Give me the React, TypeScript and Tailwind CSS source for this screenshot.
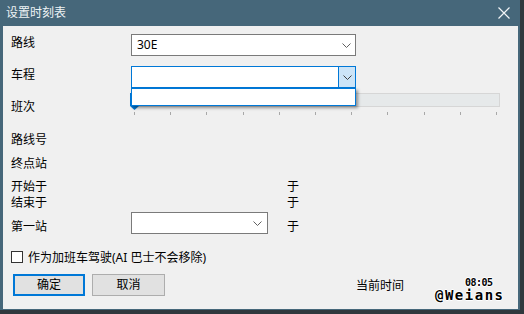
import { Fragment } from 'react'

const font = "font-['Noto_Sans','Noto_Sans_CJK_SC',sans-serif]"

function Chevron({ color = '#606060' }: { color?: string }) {
  return (
    <svg width="9" height="5" viewBox="0 0 9 5" className="shrink-0">
      <polyline points="0.5,0.5 4.5,4.5 8.5,0.5" fill="none" stroke={color} strokeWidth="1" />
    </svg>
  )
}

export default function App() {
  const ticks = Array.from({ length: 11 })

  return (
    <div className={`h-[314px] w-[524px] bg-[#30383d] text-[12px] text-black ${font}`}>
      <div className="flex h-[310px] w-[520px] flex-col bg-[#46677a]">
        {/* title bar */}
        <div className="flex h-[26px] shrink-0 items-center justify-between pl-[6px] pr-[10px] text-[12px] text-[#eef3f5]">
          <span className="leading-[16px]">设置时刻表</span>
          <svg width="12" height="12" viewBox="0 0 12 12">
            <path d="M0.5 0.5 L11.5 11.5 M11.5 0.5 L0.5 11.5" stroke="#f2f5f7" strokeWidth="1.2" />
          </svg>
        </div>

        <div className="relative mb-[1px] ml-[3px] mr-[2px] flex flex-1 flex-col bg-[#f0f0f0] pl-[8px]">
          {/* 路线 */}
          <div className="mt-[8px] flex h-[22px] items-start">
            <span className="mt-[1px] w-[120px] leading-[16px]">路线</span>
            <div className="flex h-[22px] w-[225px] items-center justify-between border border-[#7a7a7a] bg-white pl-[5px] pr-[4px]">
              <span className="leading-[16px]">30E</span>
              <Chevron />
            </div>
          </div>

          {/* 车程 */}
          <div className="mt-[10px] flex h-[22px] items-start">
            <span className="mt-[1px] w-[120px] leading-[16px]">车程</span>
            <div className="flex h-[22px] w-[225px] border border-[#0078d7] bg-white">
              <div className="flex-1" />
              <div className="flex w-[17px] items-center justify-center border-l border-[#0078d7] bg-[#cce4f7]">
                <Chevron color="#404040" />
              </div>
            </div>
          </div>

          {/* 班次 */}
          <div className="mt-[5px] flex h-[24px] items-start">
            <span className="mt-[6px] w-[120px] leading-[16px]">班次</span>
            <div className="flex w-[369px] flex-col">
              <div className="h-[14px] border border-[#d6d6d6] bg-[#e6e9ea]" />
              <div className="mt-[5px] flex h-[3px] justify-between px-[3px]">
                {ticks.map((_, i) => (
                  <span key={i} className="h-[3px] w-px bg-[#a8a8a8]" />
                ))}
              </div>
            </div>
          </div>

          <div className="mt-[15px] h-[16px] leading-[16px]">路线号</div>
          <div className="mt-[8px] h-[16px] leading-[16px]">终点站</div>

          {[['开始于', 'mt-[7px]'], ['结束于', 'mt-0']].map(([label, mt]) => (
            <Fragment key={label}>
              <div className={`${mt} flex h-[16px] leading-[16px]`}>
                <span className="w-[276px]">{label}</span>
                <span>于</span>
              </div>
            </Fragment>
          ))}

          {/* 第一站 */}
          <div className="mt-[1px] flex h-[22px] items-start">
            <span className="mt-[7px] w-[120px] leading-[16px]">第一站</span>
            <div className="flex h-[22px] w-[137px] items-center justify-end border border-[#7a7a7a] bg-white pr-[5px]">
              <Chevron />
            </div>
            <span className="ml-[19px] mt-[7px] leading-[16px]">于</span>
          </div>

          {/* checkbox */}
          <div className="mt-[16px] flex h-[16px] items-start">
            <span className="mt-[1px] h-[12px] w-[12px] border border-[#333333] bg-white" />
            <span className="ml-[5px] leading-[16px]">作为加班车驾驶(AI 巴士不会移除)</span>
          </div>

          {/* buttons */}
          <div className="mt-[8px] flex h-[22px] items-center">
            <button className="ml-[2px] flex h-[22px] w-[72px] items-center justify-center border-2 border-[#0078d7] bg-[#e1e1e1] leading-[16px]">
              确定
            </button>
            <button className="ml-[7px] flex h-[22px] w-[73px] items-center justify-center border border-[#adadad] bg-[#e1e1e1] leading-[16px]">
              取消
            </button>
            <span className="ml-[191px] mt-[2px] leading-[16px]">当前时间</span>
          </div>

          {/* slider thumb, under the open list */}
          <svg width="10" height="18" viewBox="0 0 10 18" className="absolute left-[127px] top-[67px]">
            <polygon points="0,0 9,0 9,13 4.5,17 0,13" fill="#0078d7" />
          </svg>

          {/* open dropdown list */}
          <div className="absolute left-[128px] top-[62px] h-[18px] w-[225px] border border-[#0078d7] bg-white shadow-[2px_2px_3px_rgba(0,0,0,0.4)]" />

          {/* watermark */}
          <div className="absolute left-[432px] top-[252px] flex flex-col items-end font-['DejaVu_Sans_Mono',monospace] font-bold text-black [text-shadow:1px_0_0_#fff,-1px_0_0_#fff,0_1px_0_#fff,0_-1px_0_#fff]">
            <span className="mr-[12px] text-[10px] leading-[10px] tracking-[-0.5px]">08:05</span>
            <span className="text-[14px] leading-[14px] tracking-[1.5px]">@Weians</span>
          </div>
        </div>
      </div>
    </div>
  )
}
